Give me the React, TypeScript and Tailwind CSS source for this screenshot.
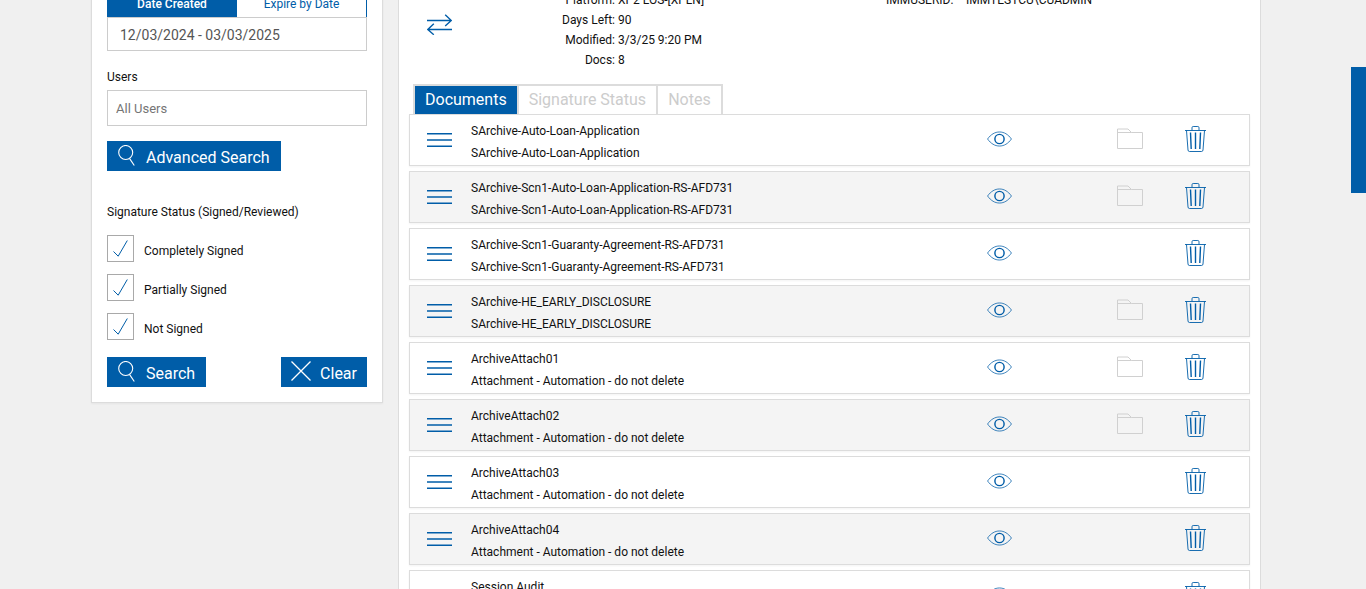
import { useState } from "react";

type Doc = {
  name: string;
  description: string;
  folder: boolean;
};

const docs: Doc[] = [
  { name: "SArchive-Auto-Loan-Application", description: "SArchive-Auto-Loan-Application", folder: true },
  { name: "SArchive-Scn1-Auto-Loan-Application-RS-AFD731", description: "SArchive-Scn1-Auto-Loan-Application-RS-AFD731", folder: true },
  { name: "SArchive-Scn1-Guaranty-Agreement-RS-AFD731", description: "SArchive-Scn1-Guaranty-Agreement-RS-AFD731", folder: false },
  { name: "SArchive-HE_EARLY_DISCLOSURE", description: "SArchive-HE_EARLY_DISCLOSURE", folder: true },
  { name: "ArchiveAttach01", description: "Attachment - Automation - do not delete", folder: true },
  { name: "ArchiveAttach02", description: "Attachment - Automation - do not delete", folder: true },
  { name: "ArchiveAttach03", description: "Attachment - Automation - do not delete", folder: false },
  { name: "ArchiveAttach04", description: "Attachment - Automation - do not delete", folder: false },
  { name: "Session Audit", description: "Session Audit", folder: false },
];

const details = [
  ["Platform:", "XP2 LOS-[XPLN]"],
  ["Days Left:", "90"],
  ["Modified:", "3/3/25 9:20 PM"],
  ["Docs:", "8"],
];

const statuses = ["Completely Signed", "Partially Signed", "Not Signed"];
const tabs = ["Documents", "Signature Status", "Notes"];

function SearchIcon() {
  return (
    <svg width="17" height="21" viewBox="0 0 17 21" fill="none" stroke="currentColor" strokeWidth="1.1" aria-hidden="true">
      <circle cx="7.7" cy="7.5" r="7" />
      <path d="M11.5 13.4 16.3 20.5" />
    </svg>
  );
}

function CloseIcon() {
  return (
    <svg width="20" height="20" viewBox="0 0 20 20" fill="none" stroke="currentColor" strokeWidth="1.3" aria-hidden="true">
      <path d="M.5.5 19.5 19.5M19.5.5.5 19.5" />
    </svg>
  );
}

function SwapIcon() {
  return (
    <svg width="25" height="21" viewBox="0 0 25 21" fill="none" stroke="currentColor" strokeWidth="1.4" aria-hidden="true">
      <path d="M0 6.5H24.5M18.2.7 24.3 6.5 18.2 12M25 15.5H.8M6.8 9.7.8 15.5 6.8 20.7" />
    </svg>
  );
}

function MenuIcon() {
  return (
    <svg width="25" height="14" viewBox="0 0 25 14" fill="none" stroke="currentColor" strokeWidth="1.4" aria-hidden="true">
      <path d="M0 .7H25M0 7H25M0 13.3H25" />
    </svg>
  );
}

function EyeIcon() {
  return (
    <svg width="25" height="16" viewBox="0 0 26 16" fill="none" stroke="currentColor" aria-hidden="true">
      <path strokeWidth=".8" d="M.6 8C4 3.2 8.2.7 13 .7S22 3.2 25.4 8C22 12.8 17.8 15.3 13 15.3S4 12.8.6 8Z" />
      <circle cx="13" cy="8" r="4.8" strokeWidth="1.5" />
    </svg>
  );
}

function FolderIcon() {
  return (
    <svg width="26" height="22" viewBox="0 0 26 22" fill="none" stroke="currentColor" aria-hidden="true">
      <path d="M.5 20.5V1H11L14.5 4.500H25.5V20.5ZM.5 4.500H14.5" />
    </svg>
  );
}

function TrashIcon() {
  return (
    <svg width="21" height="28" viewBox="0 0 21 28" fill="none" stroke="currentColor" aria-hidden="true">
      <path strokeWidth=".9" d="M0 5.5H21M7 5.2V2.7Q7 1.5 8.2 1.5H12.8Q14 1.5 14 2.7V5.2M1.5 5.5 3 25Q3.2 26.5 4.400 26.5H16.6Q17.800 26.5 18 25L19.5 5.5" />
      <path strokeWidth="1.4" d="M5.500 7.5 6.200 24M10.5 7.5V24M15.5 7.5 14.8 24" />
    </svg>
  );
}

function CheckIcon() {
  return (
    <svg width="15" height="17" viewBox="0 0 15 17" fill="none" stroke="currentColor" aria-hidden="true">
      <path d="M.5 11.5 5.2 16.2 14.3.5" />
    </svg>
  );
}

function StatusCheckbox({ label }: { label: string }) {
  const [checked, setChecked] = useState(true);

  return (
    <label className="flex items-center gap-[10px]">
      <span className="grid place-items-center">
        <input
          type="checkbox"
          checked={checked}
          onChange={() => setChecked(!checked)}
          className="col-start-1 row-start-1 size-[27px] appearance-none border border-[#a9a9a9] bg-white"
        />
        <span className="pointer-events-none col-start-1 row-start-1 text-[#005da8]">
          {checked && <CheckIcon />}
        </span>
      </span>
      <span className="pt-1">{label}</span>
    </label>
  );
}

function SearchPanel() {
  return (
    <form
      className="w-[292px] shrink-0 border border-t-0 border-[#dcdcdc] bg-white px-[15px] pb-[15px] shadow-xs"
      onSubmit={(e) => e.preventDefault()}
    >
      <div className="flex h-[27px] text-xs">
        <button type="button" className="w-1/2 bg-[#005da8] font-medium text-white">
          Date Created
        </button>
        <button type="button" className="w-1/2 border-r border-[#005da8] text-[#005da8]">
          Expire by Date
        </button>
      </div>
      <input
        type="text"
        aria-label="Date range"
        defaultValue="12/03/2024 - 03/03/2025"
        className="block h-[34px] w-full border border-[#ccc] px-3 pt-[2px] text-sm text-[#555]"
      />
      <label htmlFor="users" className="mt-4 block leading-5">
        Users
      </label>
      <input
        id="users"
        type="text"
        placeholder="All Users"
        className="mt-[3px] block h-9 w-full border border-[#ccc] px-2 text-[13px] placeholder:text-[#757575]"
      />
      <button type="button" className="mt-[15px] flex h-[30px] gap-[11px] bg-[#005da8] pt-1 pr-[11px] pl-[11px] text-base text-white">
        <SearchIcon />
        <span className="pt-[1px]">Advanced Search</span>
      </button>

      <fieldset className="mt-[31px]">
        <legend className="leading-5">Signature Status (Signed/Reviewed)</legend>
        <div className="mt-[13px] flex flex-col gap-3">
          {statuses.map((status) => (
            <StatusCheckbox key={status} label={status} />
          ))}
        </div>
      </fieldset>

      <div className="mt-[17px] flex justify-between text-base text-white">
        <button type="submit" className="flex h-[30px] gap-[11px] bg-[#005da8] px-[11px] pt-1">
          <SearchIcon />
          <span className="pt-[1px]">Search</span>
        </button>
        <button type="reset" className="flex h-[30px] gap-[9px] bg-[#005da8] px-[10px] pt-1">
          <CloseIcon />
          <span className="pt-[1px]">Clear</span>
        </button>
      </div>
    </form>
  );
}

function DocumentRow({ doc }: { doc: Doc }) {
  return (
    <li className="grid h-[52px] grid-cols-[61px_1fr_196px_66px_65px] items-center border border-[#dcdcdc] bg-white pr-[21px] shadow-xs even:bg-[#f4f4f4]">
      <button aria-label="Reorder" className="pl-[17px] text-[#005da8]">
        <MenuIcon />
      </button>
      <div className="pt-1 leading-[22px]">
        <p>{doc.name}</p>
        <p>{doc.description}</p>
      </div>
      <button aria-label="View" className="justify-self-center pb-[2px] text-[#005da8]">
        <EyeIcon />
      </button>
      {doc.folder ? (
        <button aria-label="Folder" className="justify-self-center pb-[2px] text-[#d0d0d0]">
          <FolderIcon />
        </button>
      ) : (
        <span />
      )}
      <button aria-label="Delete" className="justify-self-center pb-[2px] text-[#005da8]">
        <TrashIcon />
      </button>
    </li>
  );
}

export default function App() {
  const [activeTab, setActiveTab] = useState("Documents");

  return (
    <div className="h-screen overflow-hidden bg-[#f0f0f0] pr-[14px] font-[Roboto,sans-serif] text-xs text-[#111]">
      <div className="mx-auto -mt-[10px] flex max-w-[1170px] items-start gap-[15px]">
        <SearchPanel />

        <main className="min-w-0 flex-1 border-x border-[#dcdcdc] bg-white px-[10px] pb-[10px]">
          <section className="flex pb-[14px] leading-5">
            <button aria-label="Transfer" className="w-[62px] shrink-0 self-start pt-6 pl-[18px] text-[#005da8]">
              <SwapIcon />
            </button>
            <dl className="grid w-[415px] grid-cols-[144px_1fr] gap-x-[3px]">
              {details.map(([label, value]) => (
                <div key={label} className="contents">
                  <dt className="text-right">{label}</dt>
                  <dd>{value}</dd>
                </div>
              ))}
            </dl>
            <dl className="flex">
              <dt className="w-20">IMMUSERID:</dt>
              <dd>IMMTESTCU\CUADMIN</dd>
            </dl>
          </section>

          <div role="tablist" className="ml-1 flex h-[30px] w-fit border-2 border-b-0 border-[#dcdcdc] text-base">
            {tabs.map((tab) => (
              <button
                key={tab}
                role="tab"
                aria-selected={tab === activeTab}
                onClick={() => setActiveTab(tab)}
                className={
                  tab === activeTab
                    ? "bg-[#005da8] px-[10px] text-white"
                    : "border-l-2 border-[#dcdcdc] px-[10px] text-[#ccc]"
                }
              >
                {tab}
              </button>
            ))}
          </div>

          <ul className="flex flex-col gap-[5px]">
            {docs.map((doc) => (
              <DocumentRow key={doc.name} doc={doc} />
            ))}
          </ul>
        </main>
      </div>

      <button aria-label="Open side panel" className="fixed top-[67px] right-0 h-[126px] w-[15px] bg-[#005da8]" />
    </div>
  );
}
